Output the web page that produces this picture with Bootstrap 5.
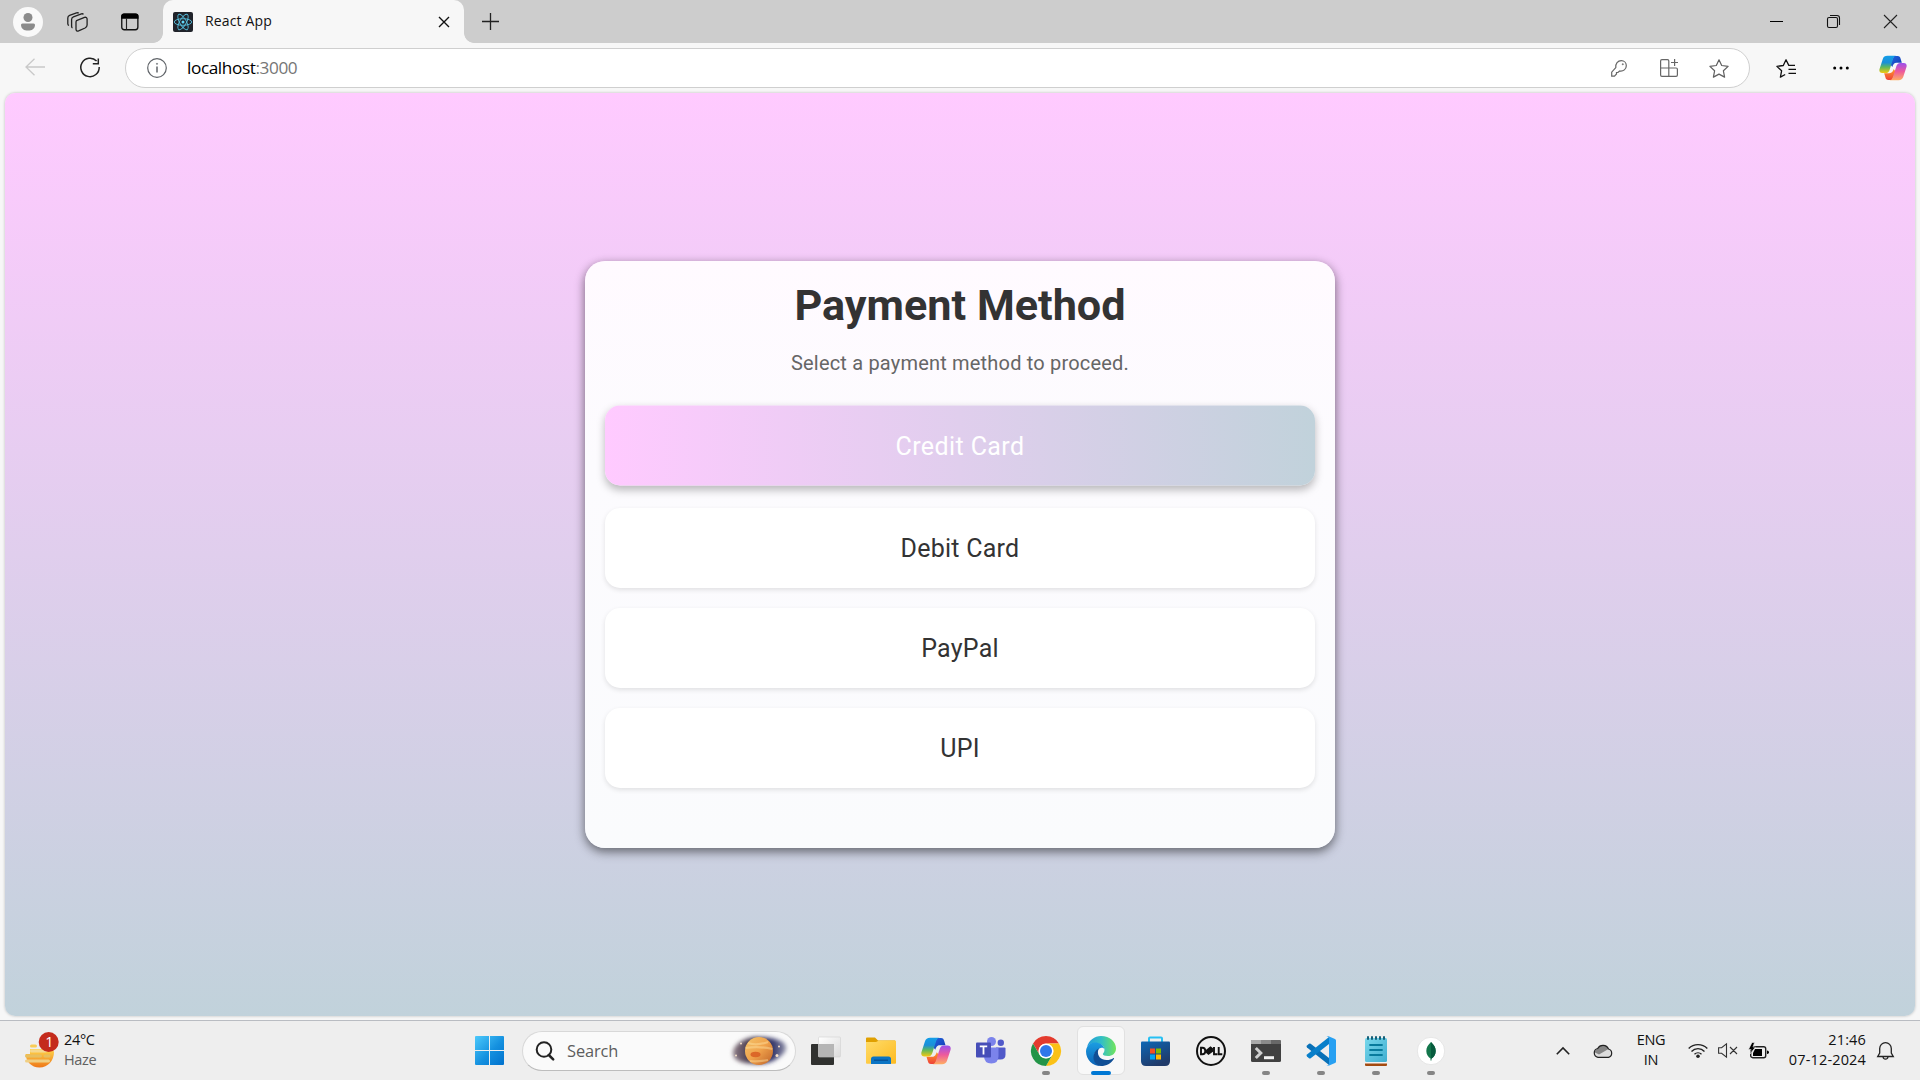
<!DOCTYPE html>
<html lang="en">
<head>
<meta charset="utf-8">
<meta name="viewport" content="width=device-width, initial-scale=1">
<title>React App</title>
<link href="https://cdn.jsdelivr.net/npm/bootstrap@5.3.0/dist/css/bootstrap.min.css" rel="stylesheet">
<style>
html,body{height:100%;overflow:hidden}
body{background:#f7f7f7;font-family:"Open Sans","Noto Sans",sans-serif;color:#111;line-height:1}
svg{display:block;overflow:visible;flex:none}
.slot{display:flex;align-items:center;justify-content:center;flex:none;height:100%}
.w22{width:22px}.w30{width:30px}.w40{width:40px}.w50{width:50px}.w55{width:55px}.w57{width:57px}
.tabstrip{height:43px;background:#cdcdcd}
.avatar{width:30px;height:30px;background:#f9f9f9}
.browser-tab{width:301px;height:43px;background:#f7f7f7;border-radius:10px 10px 0 0;position:relative;padding:0 9px 0 10px;margin-left:2px}
.browser-tab::before,.browser-tab::after{content:"";position:absolute;bottom:0;width:10px;height:10px}
.browser-tab::before{left:-10px;background:radial-gradient(circle at 0 0,#cdcdcd 9.5px,#f7f7f7 10.2px)}
.browser-tab::after{right:-10px;background:radial-gradient(circle at 100% 0,#cdcdcd 9.5px,#f7f7f7 10.2px)}
.tab-title{font-size:14px;letter-spacing:.15px;padding:0 0 2px 12px}
.toolbar-row{height:50px}
.address{width:1625px;height:40px;margin:5px 0 0 15px;flex:none;background:#fff;border:1px solid #cfcfcf;border-radius:20px}
.url{font-size:17.2px;letter-spacing:-.4px;color:#000;padding-bottom:1px;margin-left:-1px}
.url span{color:#767676}
.viewport{margin:0 5px 4px;height:923px;border-radius:10px;background:linear-gradient(180deg,#ffcaff,#c1d2db);box-shadow:0 0 3px rgba(0,0,0,.25);padding-top:168px}
.pay-card{width:750px;height:587px;border:0;border-radius:20px;background:linear-gradient(180deg,#fffaff,#fcfbfe 35%,#fafbfd);padding:19px 20px 20px;box-shadow:0 4px 12px rgba(0,0,0,.3),0 3px 8px rgba(0,0,0,.28);font-family:Roboto,sans-serif;text-align:center}
.pay-title{font-size:43.2px;font-weight:700;color:#333;line-height:52px;margin:0 0 13px}
.pay-sub{font-size:20px;color:#666;line-height:30px;margin:3px 0 30px;letter-spacing:.19px}
.pay-option{height:80px;border-radius:15px;background:#fff;border:0;color:#333;font-size:25px;padding:2px 0 0;box-shadow:0 2px 5px rgba(0,0,0,.11);letter-spacing:.24px}
.pay-option.chosen{background:linear-gradient(90deg,#ffcaff,#c1d2db);color:#fff;box-shadow:0 4px 8px rgba(0,0,0,.27);transform:translateY(-2.5px);letter-spacing:.4px}
.gap-20{gap:20px}
.taskbar{height:60px;background:#eee;border-top:1px solid #b9bcc2;font-size:14.5px}
.weather{width:475px;padding-left:25px}
.twoline{line-height:20px;letter-spacing:-.35px;padding-bottom:2px}
.searchbox{width:274px;height:40px;border-radius:20px;background:#fafafa;border:1px solid #d8d8d8;border-bottom-color:#bdbdbd;padding:0 6px 0 12px;margin:0 2px 0 18px;font-size:16.4px;color:#5d5d5d;letter-spacing:-.1px}
.app{position:relative}
.app.running::after{content:"";position:absolute;bottom:5px;width:8px;height:4px;border-radius:2px;background:#858585}
.app.current::before{content:"";position:absolute;inset:5px 3.5px;border-radius:6px;background:#f8f8f8;border:1px solid #e1e1e1}
.app.current::after{width:20px;background:#0078d4}
.app svg{position:relative}
.clock{width:87px;letter-spacing:.15px}
</style>
</head>
<body>
<svg width="0" height="0" class="position-absolute" aria-hidden="true">
<defs>
<linearGradient id="cpA" x1="0" y1="0" x2="0" y2="1"><stop offset="0" stop-color="#139ee8"/><stop offset=".4" stop-color="#1b8fd8"/><stop offset=".65" stop-color="#5cb85f"/><stop offset="1" stop-color="#f6c90e"/></linearGradient>
<linearGradient id="cpB" x1="0" y1="0" x2="0" y2="1"><stop offset="0" stop-color="#9a50ee"/><stop offset=".5" stop-color="#ee5a9c"/><stop offset="1" stop-color="#ffae62"/></linearGradient>
<linearGradient id="cpC" x1="0" y1="0" x2="1" y2="1"><stop offset="0" stop-color="#2266e0"/><stop offset="1" stop-color="#1238b0"/></linearGradient>
<linearGradient id="cpD" x1="0" y1="0" x2="0" y2="1"><stop offset="0" stop-color="#ff9a2a"/><stop offset="1" stop-color="#ee4038"/></linearGradient>
<symbol id="copilot" viewBox="0 0 30 28">
<path d="M16 1h4c2 0 2.700 1 3.200 3l1.300 4.300H19c-3 0-3.800 2-4.700 4.500L12 10z" fill="url(#cpC)"/>
<path d="M14 27h-4c-2 0-2.700-1-3.200-3l-1.300-4.300H11c3 0 3.800-2 4.700-4.500L18 18z" fill="url(#cpD)"/>
<path d="M9 .800h9.500c-2 .200-2.800 1.600-3.500 3.700l-3.600 11.300c-.7 2.200-1.900 3.700-4.300 3.700H3.500C.700 19.500-.200 17.500.500 15L4 4.200C4.700 2 6.300.800 9 .800z" fill="url(#cpA)"/>
<path d="M21 27.200h-9.500c2-.2 2.800-1.600 3.500-3.700l3.600-11.300c.7-2.200 1.900-3.700 4.300-3.700h3.600c2.800 0 3.700 2 3 4.500L26 23.800c-.7 2.200-2.300 3.400-5 3.400z" fill="url(#cpB)"/>
</symbol>
</defs>
</svg>

<header>
<div class="tabstrip d-flex align-items-center">
 <div class="slot" style="width:56px"><div class="avatar rounded-circle d-flex align-items-center justify-content-center"><svg width="14" height="18" viewBox="0 0 14 18" fill="#8b8b8b"><circle cx="7" cy="4.500" r="4.500"/><path d="M1.500 10.500h11a1.500 1.500 0 0 1 1.500 1.700C13.600 16 11 17.500 7 17.500S.400 16 0 12.200a1.500 1.500 0 0 1 1.500-1.700z"/></svg></div></div>
 <div class="slot" style="width:43px"><svg width="21" height="20" viewBox="0 0 21 20" fill="none" stroke="#222" stroke-width="1.300"><path d="M9.500 8.600l8-3.200c1.400-.5 2.600.2 2.600 1.700v6c0 1.400-.7 2.300-2 2.900l-6.500 2.800c-1.500.6-2.600 0-2.600-1.500V9.800z"/><path d="M5.500 15.800c-.7-.2-.9-.7-.9-1.500V7.600c0-1.300.6-2.200 1.800-2.700l8-3c1-.3 1.600-.1 2.100.5"/><path d="M2 13.500c-.9-.3-1.200-.8-1.200-1.700V6c0-1.300.6-2.200 1.800-2.700L9.500.900c1-.3 1.700-.2 2.200.3"/></svg></div>
 <div class="slot" style="width:62px"><svg width="18" height="18" viewBox="0 0 19 18"><rect x=".8" y=".8" width="17" height="16.400" rx="2.600" fill="none" stroke="#111" stroke-width="1.400"/><path d="M.2 5.600V3A2.900 2.900 0 0 1 3 .1h12.600a2.900 2.900 0 0 1 2.900 2.900v2.600z"/><path d="M5.800 5v12" stroke="#222" stroke-width="1.200"/></svg></div>
 <div class="browser-tab d-flex align-items-center">
  <svg width="20" height="20" viewBox="0 0 20 20"><rect width="20" height="20" rx="2" fill="#20232a"/><g fill="none" stroke="#57bfdd" stroke-width=".9"><ellipse cx="10" cy="10" rx="8.700" ry="3.300"/><ellipse cx="10" cy="10" rx="8.700" ry="3.300" transform="rotate(60 10 10)"/><ellipse cx="10" cy="10" rx="8.700" ry="3.300" transform="rotate(120 10 10)"/></g><circle cx="10" cy="10" r="1.500" fill="#61dafb"/></svg>
  <span class="tab-title flex-grow-1">React App</span>
  <div class="slot w22"><svg width="10" height="10" viewBox="0 0 10 10" stroke="#111" stroke-width="1.400"><path d="M0 0l10 10M10 0L0 10"/></svg></div>
 </div>
 <div class="slot" style="width:52px"><svg width="17" height="17" viewBox="0 0 17 17" stroke="#222" stroke-width="1.300"><path d="M8.500 0v17M0 8.500h17"/></svg></div>
 <div class="d-flex h-100 ms-auto pe-1" style="margin-right:-3px">
  <div class="slot w57"><svg width="13" height="13"><path d="M0 6.500h13" stroke="#000"/></svg></div>
  <div class="slot w57"><svg width="13" height="13" viewBox="0 0 13 13" fill="none" stroke="#111" stroke-width="1.100"><rect x=".5" y="2.500" width="10" height="10" rx="1.500"/><path d="M3 .5h7a2.500 2.500 0 0 1 2.500 2.500v7"/></svg></div>
  <div class="slot w57"><svg width="13" height="13" viewBox="0 0 13 13" stroke="#222" stroke-width="1.100"><path d="M0 0l13 13M13 0L0 13"/></svg></div>
 </div>
</div>
<div class="toolbar-row d-flex">
 <div class="slot" style="width:70px;padding-bottom:2px"><svg width="20" height="18" viewBox="0 0 20 18" fill="none" stroke="#c9c9c9" stroke-width="1.300"><path d="M9.500.7L1 9l8.500 8.300M1 9h19"/></svg></div>
 <div class="slot w40"><svg width="20" height="20" viewBox="0 0 20 20" fill="none" stroke="#222" stroke-width="1.500"><path d="M16.600 3A9.200 9.200 0 1 0 19.200 9M18.300.4v5.400h-5.500"/></svg></div>
 <div class="address d-flex align-items-center">
  <div class="slot" style="width:62px"><svg width="20" height="20" viewBox="0 0 20 20" fill="none" stroke="#5f6368" stroke-width="1.200"><circle cx="10" cy="10" r="9.300"/><path d="M10 8.500v6" stroke-width="1.500"/><circle cx="10" cy="5.800" r=".6" fill="#5f6368" stroke-width=".6"/></svg></div>
  <div class="url flex-grow-1">localhost<span>:3000</span></div>
  <div class="slot w50"><svg width="16" height="17" viewBox="0 0 16 17" fill="none" stroke="#666" stroke-width="1.200"><path d="M4.800 7.600C4.300 3.800 6.800.7 10.300.7c2.800 0 5 2.200 5 5 0 3.500-3 5.900-6.600 5.300l-1.800 1.500H5.500V14l-2 2.200H.7v-4z"/><circle cx="11.800" cy="4.300" r=".7" fill="#666" stroke-width=".4"/></svg></div>
  <div class="slot w50"><svg width="18" height="18" viewBox="0 0 18 18" fill="none" stroke="#666" stroke-width="1.200"><path d="M8.800 9V1.900A1.300 1.300 0 0 0 7.500.6H1.900A1.300 1.300 0 0 0 .6 1.900v14.200a1.300 1.300 0 0 0 1.300 1.300h14.200a1.300 1.300 0 0 0 1.300-1.300v-5.800A1.300 1.300 0 0 0 16.100 9H.6M8.800 9v8.400M14.600 0v7M11 3.500h7"/></svg></div>
  <div class="slot w50"><svg width="20" height="19" viewBox="0 0 20 19" fill="none" stroke="#5f5f5f" stroke-width="1.200" stroke-linejoin="round"><path d="M10 .8l2.700 5.700 6.400.9-4.700 4.400 1.200 6.300L10 15.100l-5.600 3 1.200-6.300L.900 7.400l6.400-.9z"/></svg></div>
  <div style="width:5px"></div>
 </div>
 <div class="slot" style="width:71px"><svg width="20" height="19" viewBox="0 0 20 19" fill="none" stroke="#111" stroke-width="1.300" stroke-linejoin="round"><path d="M19 6.400h-6.200L10 .8 7.300 6.500l-6.400.9 4.700 4.400-1.200 6.300 4.800-2.600"/><path d="M12.500 10.300H20M12.500 14.300H20"/></svg></div>
 <div class="slot" style="width:39px"><svg width="16" height="4" viewBox="0 0 16 4"><circle cx="1.700" cy="2" r="1.500"/><circle cx="8" cy="2" r="1.500"/><circle cx="14.300" cy="2" r="1.500"/></svg></div>
 <div class="slot" style="width:60px;padding-left:6px"><svg width="28" height="26"><use href="#copilot"/></svg></div>
</div>
</header>

<main class="viewport d-flex justify-content-center align-items-start">
 <section class="card pay-card">
  <h1 class="pay-title">Payment Method</h1>
  <p class="pay-sub">Select a payment method to proceed.</p>
  <div class="d-grid gap-20">
   <button class="btn pay-option chosen">Credit Card</button>
   <button class="btn pay-option">Debit Card</button>
   <button class="btn pay-option">PayPal</button>
   <button class="btn pay-option">UPI</button>
  </div>
 </section>
</main>

<footer class="taskbar d-flex align-items-center">
 <div class="weather d-flex align-items-center">
  <svg width="39" height="36" viewBox="0 0 39 36"><defs><linearGradient id="sun" x1="0" y1="0" x2="0" y2="1"><stop offset="0" stop-color="#ffd84d"/><stop offset="1" stop-color="#ee7718"/></linearGradient></defs><g transform="translate(0 -1)"><path d="M1.500 17h26a14 14 0 0 1 1.500 3c0 8.500-6 15.500-14.500 15.500S1 29 .5 22z" fill="url(#sun)"/><path d="M0 16h5v6H0z" fill="#eee"/><g stroke-width="3" stroke-linecap="round"><path d="M6.500 14h4" stroke="#f8cc55"/><path d="M6.500 19h14" stroke="#f5d890"/><path d="M1.500 24h14M20 24h4" stroke="#e7bf60"/><path d="M1.500 29h22" stroke="#f0cf83"/></g><circle cx="23.700" cy="10" r="10" fill="#c42b1c"/><text x="20.300" y="15.200" fill="#fff" font-size="14.500" font-family="Open Sans,sans-serif">1</text></g></svg>
  <div class="twoline"><div>24°C</div><div style="color:#606060">Haze</div></div>
 </div>
 <div class="slot" style="width:29px"><svg width="29" height="29" viewBox="0 0 29 29"><defs><linearGradient id="win" x1="0" y1="0" x2="1" y2="1"><stop offset="0" stop-color="#4cc9fb"/><stop offset=".55" stop-color="#1490df"/><stop offset="1" stop-color="#0071cd"/></linearGradient></defs><path fill="url(#win)" d="M1 0h13v14H0V1a1 1 0 0 1 1-1zM15 0h13a1 1 0 0 1 1 1v13H15zM0 15h14v14H1a1 1 0 0 1-1-1zM15 15h14v13a1 1 0 0 1-1 1H15z"/></svg></div>
 <div class="searchbox d-flex align-items-center">
  <svg width="20" height="20" viewBox="0 0 20 20" fill="none" stroke="#222" stroke-width="2"><circle cx="9" cy="8.500" r="7.300"/><path d="M13.800 14l4.400 4.400" stroke-width="2.500" stroke-linecap="round"/></svg>
  <span class="flex-grow-1" style="padding:1px 0 0 12px">Search</span>
  <svg width="60" height="34" viewBox="0 0 60 34"><defs><filter id="soft" x="-20%" y="-20%" width="140%" height="140%"><feGaussianBlur stdDeviation="2"/></filter><linearGradient id="pl" x1="0" y1="0" x2="1" y2="1"><stop offset="0" stop-color="#f4c46b"/><stop offset=".5" stop-color="#f0a24b"/><stop offset="1" stop-color="#bd6128"/></linearGradient><linearGradient id="sky"><stop offset="0" stop-color="#8b7a82"/><stop offset=".4" stop-color="#352a42"/><stop offset=".75" stop-color="#35366a"/><stop offset="1" stop-color="#8e90a8"/></linearGradient></defs><path d="M4 18C5 10 16 3 28 3s16 1 24 4c6 3 7 9 1 14-7 6-14 9-26 9C14 30 3 27 4 18z" fill="url(#sky)" filter="url(#soft)"/><circle cx="30" cy="17" r="14" fill="url(#pl)"/><path d="M19 9q9 3 20-1M16.500 14q14-2 27 1M21 27q8 1 18-1" stroke="#ffe2a2" stroke-width="2.200" fill="none" opacity=".45"/><ellipse cx="26.500" cy="20.500" rx="5" ry="2.800" fill="#d96125" opacity=".9"/><g fill="#f6e1c9"><circle cx="12" cy="9.500" r="1"/><circle cx="7" cy="21.500" r="1"/><circle cx="50" cy="12.500" r="1"/><circle cx="48" cy="21.500" r="1.500"/></g></svg>
 </div>
 <nav class="d-flex h-100">
  <div class="app slot w55"><svg width="30" height="28" viewBox="0 0 30 28"><defs><linearGradient id="tv" x1="0" y1="0" x2="1" y2="1"><stop stop-color="#fff"/><stop offset="1" stop-color="#dadada"/></linearGradient></defs><rect y="7" width="23" height="21" rx="1" fill="#30312f"/><rect x="7.500" width="22" height="20" rx="1" fill="url(#tv)" stroke="#d2d2d2" stroke-width=".6"/><path d="M7.500 7H23v13H7.500z" fill="#b5b5b5"/></svg></div>
  <div class="app slot w55"><svg width="30" height="27" viewBox="0 0 30 27"><defs><linearGradient id="fo" x1="0" y1="0" x2="1" y2="1"><stop stop-color="#ffdc69"/><stop offset="1" stop-color="#fdba20"/></linearGradient></defs><path d="M0 1.500Q0 .5 1 .5h8l3 3h17v8H0z" fill="#e0a000"/><path d="M0 5h10l3-1.500h16q1 0 1 1V26q0 .8-1 .8H1q-1 0-1-.8z" fill="url(#fo)"/><path d="M5 27v-5q0-2.500 2.500-2.500h15Q25 19.500 25 22v5z" fill="#0b74c4"/><path d="M8 23.200h14" stroke="#064d91" stroke-width="1.200"/></svg></div>
  <div class="app slot w55"><svg width="30" height="28"><use href="#copilot"/></svg></div>
  <div class="app slot w55"><svg width="30" height="27" viewBox="0 0 30 27"><circle cx="15.500" cy="4.500" r="4.500" fill="#7b83eb"/><circle cx="24.800" cy="5.800" r="3.200" fill="#5059c9"/><path d="M20 10.500h8.500q1 0 1 1v6q0 5-5 5H20z" fill="#5059c9"/><path d="M8 10.500h14.500V19q0 7.500-7.200 7.500T8 19z" fill="#7b83eb"/><rect y="5.500" width="15" height="15" rx="1" fill="#464eb8"/><path d="M3.800 9.300h7.400M7.500 9.300v8.200" stroke="#fff" stroke-width="1.800"/></svg></div>
  <div class="app running slot w55"><svg width="30" height="30" viewBox="0 0 30 30"><circle cx="15" cy="15" r="15" fill="#fff"/><path d="M2 7.500A15 15 0 0 1 28 7.500H15a7.500 7.500 0 0 0-6.500 11.200z" fill="#e33b2e"/><path d="M28 7.500A15 15 0 0 1 15 30l6.500-11.300A7.500 7.500 0 0 0 15 7.500z" fill="#fbc116"/><path d="M15 30A15 15 0 0 1 2 7.500l6.500 11.200a7.500 7.500 0 0 0 13 0z" fill="#239447"/><circle cx="15" cy="15" r="7.300" fill="#fff"/><circle cx="15" cy="15" r="6" fill="#3078ea"/></svg></div>
  <div class="app running current slot w55"><svg width="30" height="30" viewBox="0 0 30 30"><defs><linearGradient id="ea" x1="0" y1=".5" x2="1" y2=".5"><stop stop-color="#249bdc"/><stop offset=".5" stop-color="#32bfc5"/><stop offset="1" stop-color="#72e55b"/></linearGradient><linearGradient id="eb" x1="0" y1="0" x2="0" y2="1"><stop stop-color="#1b9de2"/><stop offset="1" stop-color="#0b62b5"/></linearGradient></defs><path d="M1 11C3 4 8.500 0 15 0c9 0 15 6 15 12.500 0 5-4 7.500-8 7.500-3.500 0-5.200-1-5.200-2 0-.7 1.700-1.400 1.700-4.200C18.500 9 13 7 9 7c-4 0-7 2-8 4z" fill="url(#ea)"/><path d="M18.500 13.500C18 9 13.500 6.500 9 6.500 3 6.500 0 11 0 15.500 0 24 7 30 14.500 30 10 28 8 24.500 8 21c0-5 4-8 6.500-9 2-.5 3.500 0 4 1.500z" fill="url(#eb)"/><path d="M12 15c-.8 5 3 9 8.500 9 3 0 5-.8 6.800-1.800.7-.3 1 .2.600.8C25 27.500 20.500 30 15 30 10 29.500 7 25 7.500 20.500 8 16 11 13 13 12.500c-.5.8-.8 1.500-1 2.500z" fill="#104f96"/></svg></div>
  <div class="app slot w55"><svg width="29" height="30" viewBox="0 0 29 30"><defs><linearGradient id="st" x1="0" y1="0" x2=".5" y2="1"><stop stop-color="#0d67b5"/><stop offset="1" stop-color="#203a69"/></linearGradient></defs><path d="M8 6V2.500q0-1 1-1h11q1 0 1 1V6" fill="none" stroke="#26c0f3" stroke-width="2"/><path d="M1 5.500h27q1 0 1 1V25q0 5-5 5H5q-5 0-5-5V6.500q0-1 1-1z" fill="url(#st)"/><path d="M9 12.500h5v5H9z" fill="#f25022"/><path d="M15 12.500h5v5h-5z" fill="#7fba00"/><path d="M9 18.500h5v5H9z" fill="#00a4ef"/><path d="M15 18.500h5v5h-5z" fill="#ffb900"/></svg></div>
  <div class="app slot w55"><svg width="30" height="30" viewBox="0 0 30 30"><circle cx="15" cy="15" r="14" fill="none" stroke="#111" stroke-width="2"/><g fill="none" stroke="#111" stroke-width="1.900"><path d="M5 11.700v6.600h1.300q3 0 3-3.300t-3-3.300z"/><path d="M9.500 15.500l5-4 1.500 1.200-4.200 3.200 1.200.9 4.200-3.200M10.500 16l2 1.800 4.500-3.400"/><path d="M18 11v7.300h3.400M22.700 11v7.300h3.600"/></g></svg></div>
  <div class="app running slot w55"><svg width="30" height="22" viewBox="0 0 30 22"><rect width="30" height="22" rx="1.500" fill="#414141"/><path d="M1 0h9v4H0V1z" fill="#aaa"/><path d="M10 0h10v4H10z" fill="#8b8b8b"/><path d="M20 0h9l1 1v3H20z" fill="#686868"/><path d="M4.800 8l5 5-5 5" fill="none" stroke="#d0d0d0" stroke-width="3"/><path d="M13 17.700h10" stroke="#f2f2f2" stroke-width="3"/></svg></div>
  <div class="app running slot w55"><svg width="30" height="30" viewBox="0 0 30 30"><path d="M1 9.500l2-1.800q.8-.6 1.700 0L23 22v7L1 11.500Q0 10.500 1 9.500z" fill="#0870b7"/><path d="M1 20.500l2 1.800q.8.600 1.700 0L23 8V1L1 18.500q-1 1 0 2z" fill="#087fca"/><path d="M22 0l7 3q1 .5 1 1.500v21q0 1-1 1.500l-7 3q-.8.200-1.500-.7 2.500 1 2.500-1.300V2Q23-.3 20.500.7 21.200-.2 22 0z" fill="#27a0f2"/></svg></div>
  <div class="app running slot w55"><svg width="22" height="30" viewBox="0 0 22 30"><defs><linearGradient id="np" x1="0" y1="0" x2="1" y2="1"><stop stop-color="#78d8ec"/><stop offset="1" stop-color="#41aed0"/></linearGradient></defs><path d="M0 27h22v2q0 1-1 1H1q-1 0-1-1z" fill="#a34a10"/><path d="M0 25h22v2.500H0z" fill="#f2f2f2"/><rect y="2" width="22" height="24" rx="1.500" fill="url(#np)"/><g stroke="#145f78" stroke-width="2" stroke-linecap="round"><path d="M3 1v2M7 1v2M11 1v2M15 1v2M19 1v2"/><path d="M5 9h12M5 14h12M5 19h12" stroke="#087b9d" stroke-width="1.800"/></g></svg></div>
  <div class="app running slot w55"><svg width="28" height="28" viewBox="0 0 28 28"><circle cx="14" cy="14" r="13.700" fill="#fff" stroke="#d8d8d8" stroke-width=".6"/><path d="M14 5c3 3 4.700 5.500 4.700 9 0 3.700-2 6-4.200 7.500v2h-1v-2C11.300 20 9.300 17.700 9.300 14 9.300 10.500 11 8 14 5z" fill="#13764c"/><path d="M14 5v17c3-2 4.700-4.300 4.700-8S17 8 14 5z" fill="#075b3e"/></svg></div>
 </nav>
 <div class="d-flex align-items-center h-100 ms-auto">
  <div class="slot w40"><svg width="14" height="8" viewBox="0 0 14 8" fill="none" stroke="#222" stroke-width="1.600"><path d="M.8 7.200L7 1l6.200 6.200"/></svg></div>
  <div class="slot w40"><svg width="20" height="14" viewBox="0 0 20 14"><path d="M4.700 4.500A6 6 0 0 1 15.500 5a4.300 4.300 0 0 1 0 8.500H5A4.500 4.500 0 0 1 4.700 4.500z" fill="#ddd"/><path d="M4.700 4.500A6 6 0 0 1 15.500 5L6 10.500 1 8z" fill="#858585"/><path d="M4.700 4.500A6 6 0 0 1 15.500 5a4.300 4.300 0 0 1 0 8.300H5A4.500 4.500 0 0 1 4.700 4.500z" fill="none" stroke="#222" stroke-width="1.200"/></svg></div>
  <div class="slot twoline text-center" style="width:56px"><div>ENG<br>IN</div></div>
  <div class="slot" style="width:38px"><svg width="20" height="15" viewBox="0 0 20 15" fill="none" stroke="#222" stroke-width="1.400"><path d="M.7 5.500a13 13 0 0 1 18.600 0M3.500 8.400a9 9 0 0 1 13 0M6.500 11.300a5 5 0 0 1 7 0"/><circle cx="10" cy="13.200" r="1.800" fill="#222" stroke="none"/></svg></div>
  <div class="slot w22"><svg width="20" height="15" viewBox="0 0 20 15" fill="none" stroke="#333" stroke-width="1.100"><path d="M.6 4.800h3L8.500.8v13.400l-4.900-4h-3zM12 4l7 7M19 4l-7 7"/></svg></div>
  <div class="slot w40"><svg width="20" height="16" viewBox="0 0 20 16"><rect x="1.700" y="3.700" width="15" height="11" rx="2" fill="none" stroke="#222" stroke-width="1.400"/><path d="M18 7.500q2 0 2 1.800T18 11z"/><path d="M6 6h7v7H4v-3z"/><path d="M3 -.5L-.5 6.500H2L1 11l5.500-7H4l1.500-4.500z" stroke="#eee" stroke-width=".6"/></svg></div>
  <div class="twoline clock text-end"><div>21:46</div><div>07-12-2024</div></div>
  <div class="slot" style="width:38px"><svg width="17" height="18" viewBox="0 0 17 18" fill="none" stroke="#222" stroke-width="1.300"><path d="M8.500.7a5.800 5.800 0 0 1 5.800 5.800v4.500l2 3.500H.7l2-3.500V6.500A5.800 5.800 0 0 1 8.500.7zM6 15q.4 2.200 2.500 2.200T11 15"/></svg></div>
  <div style="width:16px"></div>
 </div>
</footer>
<script src="https://cdn.jsdelivr.net/npm/bootstrap@5.3.0/dist/js/bootstrap.bundle.min.js"></script>
</body>
</html>
